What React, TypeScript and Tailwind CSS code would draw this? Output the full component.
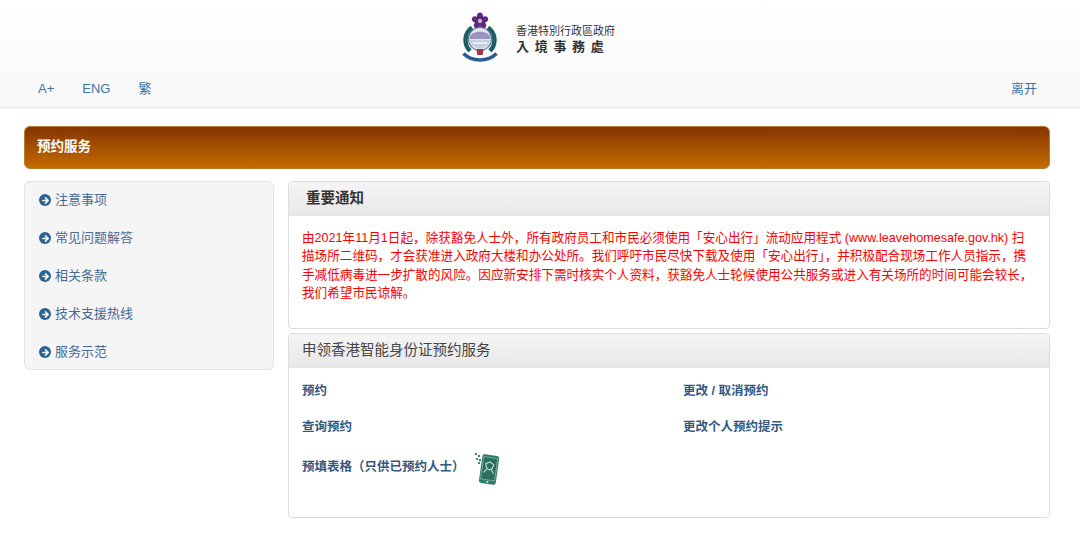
import { ArrowRight } from "lucide-react";

const fontStack = "font-['Liberation_Sans','Noto_Sans_CJK_SC',sans-serif]";

const sideLinks = ["注意事项", "常见问题解答", "相关条款", "技术支援热线", "服务示范"];

const Crest = () => (
  <svg width="40" height="52" viewBox="0 0 40 52">
    {/* bauhinia */}
    <g fill="#5e2a7e">
      {[0, 72, 144, 216, 288].map((deg) => (
        <ellipse key={deg} cx="20" cy="4.800" rx="3.100" ry="4.300" transform={`rotate(${deg} 20 9)`} />
      ))}
    </g>
    <circle cx="20" cy="9" r="2.200" fill="#bfaed0" />
    {/* wreath */}
    <path d="M12 15.500A15.500 15.500 0 0 0 10 39" fill="none" stroke="#1c6160" strokeWidth="4.500" />
    <path d="M28 15.500A15.500 15.500 0 0 1 30 39" fill="none" stroke="#1c6160" strokeWidth="4.500" />
    {/* badge */}
    <circle cx="20" cy="27" r="11.500" fill="#dfe3ee" stroke="#5f78a5" strokeWidth="1.200" />
    <path d="M9.500 25c3-7 18-7 21 0v2h-21z" fill="#9a93c0" />
    <path d="M10 28h20c-1 5-5 8.500-10 8.500S11 33 10 28z" fill="#c5d0df" />
    <path d="M13 31h14" stroke="#ffffff" strokeWidth="1.200" />
    {/* ribbon */}
    <path d="M16.500 37h7l-.8 6h-5.400z" fill="#a8324a" />
    <path d="M3.500 41.500C9 47 14 48 20 48s11-1 16.500-6.500" fill="none" stroke="#2b5d94" strokeWidth="3.600" />
  </svg>
);

const PhoneIcon = () => (
  <svg width="24" height="33" viewBox="0 0 24 33">
    <g fill="#3b8a75">
      <rect x="0" y="0" width="2" height="2" />
      <rect x="3" y="2" width="2" height="2" />
      <rect x="1" y="5" width="2" height="2" />
      <rect x="4" y="6" width="2" height="2" />
      <rect x="3" y="9" width="2" height="2" />
    </g>
    <g transform="rotate(8 14 17)">
      <rect x="5.500" y="2" width="17" height="29" rx="2.500" fill="#2f7a66" />
      <rect x="7" y="4.500" width="14" height="22.500" fill="#2a6f5c" stroke="#e3efe9" strokeWidth="0.400" />
      <circle cx="14" cy="29" r="1" fill="#dfeee8" />
      <path d="M10 11l4-2 4 2-1 4-3 2-3-2zM9 20l3-4M19 20l-3-4" fill="none" stroke="#d7e8e1" strokeWidth="1" />
    </g>
  </svg>
);

const PanelHead = ({ title, bold }: { title: string; bold?: boolean }) => (
  <div
    className={`h-[34px] flex items-center rounded-t-[4px] border-b border-[#e4e4e4] bg-gradient-to-b from-[#f5f5f5] to-[#e8e8e8] text-[14.500px] ${
      bold ? "pl-[17px] font-bold text-[#333]" : "pl-[13px] text-[#444]"
    }`}
  >
    {title}
  </div>
);

const ServiceLink = ({ label }: { label: string }) => (
  <a className="text-[12.500px] font-bold text-[#34587f]">{label}</a>
);

export default function App() {
  return (
    <div className={`w-[1080px] h-[550px] overflow-hidden bg-white ${fontStack}`}>
      {/* header */}
      <header className="h-[108px] flex flex-col border-b border-[#e7e7e7] bg-gradient-to-b from-white to-[#f8f8f8] shadow-[0_1px_2px_rgba(0,0,0,0.05)]">
        <div className="flex justify-center pt-[12px] pr-[5px] h-[79px] shrink-0">
          <div className="flex items-start gap-[16px]">
            <Crest />
            <div className="w-[99px] pt-[11px] text-[#333]">
              <div className="text-[11px] leading-[14px] whitespace-nowrap font-['Noto_Sans_CJK_TC',sans-serif]">香港特別行政區政府</div>
              <div className="text-[13px] leading-[18px] tracking-[5.700px] whitespace-nowrap font-semibold font-['Noto_Sans_CJK_TC',sans-serif]">入境事務處</div>
            </div>
          </div>
        </div>
        <nav className="flex items-center px-[38px] text-[13px] text-[#3f74a8]">
          <a>A+</a>
          <a className="ml-[28px]">ENG</a>
          <a className="ml-[28px]">繁</a>
          <a className="ml-auto mr-[5px]">离开</a>
        </nav>
      </header>

      <main className="px-[24px] pr-[30px] pt-[18px]">
        {/* title bar */}
        <div className="h-[43px] flex items-center pl-[12px] rounded-[6px] border border-[#b9772f] bg-gradient-to-b from-[#853500] to-[#c46c00] text-[13.500px] font-bold text-white">
          预约服务
        </div>

        <div className="flex gap-[14px] mt-[12px] items-start">
          {/* side menu */}
          <aside className="w-[250px] h-[189px] rounded-[6px] border border-[#e3e3e3] bg-[#f5f5f5] pl-[14px]">
            <div className="flex flex-col -mt-[1px]">
              {sideLinks.map((label) => (
                <a key={label} className="h-[38px] shrink-0 flex items-center gap-[4px] text-[13px] text-[#4a6a94]">
                  <span className="w-[12px] h-[12px] flex items-center justify-center rounded-full bg-[#2a6496] text-white">
                    <ArrowRight size={9} strokeWidth={4} />
                  </span>
                  {label}
                </a>
              ))}
            </div>
          </aside>

          {/* panels */}
          <div className="flex-1 flex flex-col gap-[4px]">
            <section className="h-[148px] rounded-[4px] border border-[#ddd] bg-white">
              <PanelHead title="重要通知" bold />
              <p className="px-[13px] pt-[13px] text-[12.600px] leading-[18.300px] text-[#ff0000] whitespace-nowrap">
                由2021年11月1日起，除获豁免人士外，所有政府员工和市民必须使用「安心出行」流动应用程式 (www.leavehomesafe.gov.hk) 扫
                <br />
                描场所二维码，才会获准进入政府大楼和办公处所。我们呼吁市民尽快下载及使用「安心出行」，并积极配合现场工作人员指示，携
                <br />
                手减低病毒进一步扩散的风险。因应新安排下需时核实个人资料，获豁免人士轮候使用公共服务或进入有关场所的时间可能会较长，
                <br />
                我们希望市民谅解。
              </p>
            </section>

            <section className="h-[185px] rounded-[4px] border border-[#ddd] bg-white">
              <PanelHead title="申领香港智能身份证预约服务" />
              <div className="grid grid-cols-[381px_1fr] pl-[13px] pt-[14px] auto-rows-[36px]">
                <ServiceLink label="预约" />
                <ServiceLink label="更改 / 取消预约" />
                <ServiceLink label="查询预约" />
                <ServiceLink label="更改个人预约提示" />
                <div className="flex items-start gap-[10px]">
                  <span className="whitespace-nowrap"><ServiceLink label="预填表格（只供已预约人士）" /></span>
                  <span className="-mt-[1px] shrink-0"><PhoneIcon /></span>
                </div>
              </div>
            </section>
          </div>
        </div>
      </main>
    </div>
  );
}
